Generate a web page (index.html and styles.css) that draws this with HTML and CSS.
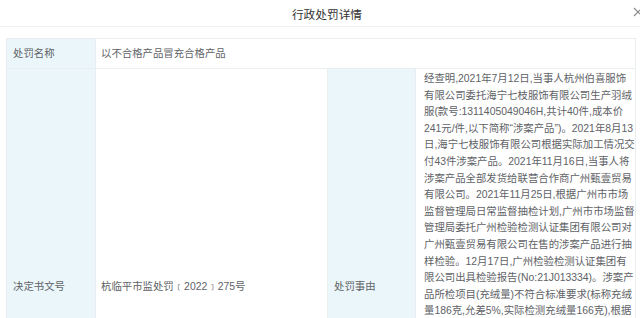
FILE: index.html
```html
<!DOCTYPE html>
<html lang="zh-CN">

<head>
    <meta charset="UTF-8">
    <meta name="viewport" content="width=device-width, initial-scale=1.0">
    <title>行政处罚详情</title>

    <link rel="stylesheet" href="styles.css">
</head>

<body>
    <div class="dialog">
        <div class="dialog-head">
            <h1>行政处罚详情</h1>
            <button class="close-btn">
                <svg width="10" height="10" viewBox="0 0 10 10">
                    <path d="M1 1 L9 9 M9 1 L1 9" stroke="#888" stroke-width="1.1" fill="none" />
                </svg>
            </button>
        </div>

        <div class="dialog-body">
            <table class="detail-table">
                <colgroup>
                    <col class="col-label">
                    <col class="col-value">
                    <col class="col-label2">
                    <col>
                </colgroup>
                <tr class="row-short">
                    <td class="label">处罚名称</td>
                    <td colspan="3">以不合格产品冒充合格产品</td>
                </tr>
                <tr>
                    <td class="label">决定书文号</td>
                    <td>杭临平市监处罚﹝2022﹞275号</td>
                    <td class="label">处罚事由</td>
                    <td class="reason">经查明,2021年7月12日,当事人杭州伯喜服饰<br>有限公司委托海宁七枝服饰有限公司生产羽绒<br>服(款号:1311405049046H,共计40件,成本价<br>241元/件,以下简称“涉案产品”)。2021年8月13<br>日,海宁七枝服饰有限公司根据实际加工情况交<br>付43件涉案产品。2021年11月16日,当事人将<br>涉案产品全部发货给联营合作商广州甄壹贸易<br>有限公司。2021年11月25日,根据广州市市场<br>监督管理局日常监督抽检计划,广州市市场监督<br>管理局委托广州检验检测认证集团有限公司对<br>广州甄壹贸易有限公司在售的涉案产品进行抽<br>样检验。12月17日,广州检验检测认证集团有<br>限公司出具检验报告(No:21J013334)。涉案产<br>品所检项目(充绒量)不符合标准要求(标称充绒<br>量186克,允差5%,实际检测充绒量166克),根据<br>《中华人民共和国产品质量法》第三十二条的<br>规定,当事人的上述行为已构成以不合格产品<br>冒充合格产品的违法行为。依据《中华人民共<br>和国产品质量法》第五十条的规定,责令当事<br>人改正违法行为,并作出如下行政处罚:1.没<br>收违法所得;2.处违法生产、销售产品货值金<br>额百分之五十的罚款。当事人在案件调查过程<br>中积极配合,主动提供相关证据材料,并已对<br>剩余涉案产品进行召回处理,具有从轻处罚情<br>节,依法予以从轻处罚。当事人已于规定期限<br>内履行完毕。</td>
                </tr>
            </table>
        </div>
    </div>
</body>

</html>
```

FILE: styles.css
```css
* {
    box-sizing: border-box;
}

body {
    margin: 0;
    background-color: white;
    font-family: "Liberation Sans", "Noto Sans CJK SC", sans-serif;
    color: #606266;
    overflow: hidden;
}

.dialog-head {
    position: relative;
    height: 27px;
    border-bottom: 1px solid #f0f2f3;
    display: flex;
    justify-content: center;
    align-items: center;
    padding-left: 14px;
}

.dialog-head h1 {
    margin: 0;
    font-size: 11.7px;
    font-weight: normal;
    color: #333;
}

.close-btn {
    position: absolute;
    right: -3px;
    top: 7px;
    border: none;
    padding: 0;
    background-color: transparent;
    line-height: 0;
}

.dialog-body {
    padding: 11px 4px 0 6px;
}

.detail-table {
    width: 630px;
    border-collapse: collapse;
    table-layout: fixed;
    font-size: 10.4px;
}

.col-label {
    width: 89px;
}

.col-value {
    width: 232px;
}

.col-label2 {
    width: 88px;
}

.detail-table td {
    border: 1px solid #e9eef0;
    padding: 6px 5px;
    line-height: 16px;
    vertical-align: middle;
}

.detail-table .label {
    background-color: #eaf6fa;
    padding-left: 6px;
    color: #606266;
}

.row-short td {
    height: 30px;
}

.detail-table .reason {
    padding: 2px 6px 2px 8px;
    white-space: nowrap;
    line-height: 16.6px;
}
```
